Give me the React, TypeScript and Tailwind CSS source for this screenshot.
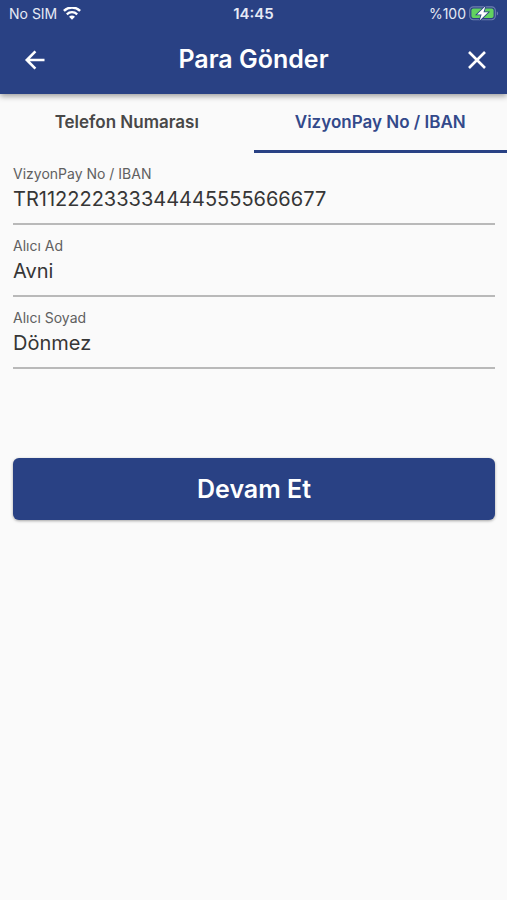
import { useState } from "react";

function WifiIcon() {
  return (
    <svg className="h-[14px] w-[18px]" viewBox="0 0 18 14" fill="none" aria-hidden="true">
      <path d="M0.9 3.9C5.4 -0.5 12.6 -0.5 17.1 3.9" stroke="white" strokeWidth="2.5" />
      <path d="M3.8 7.3C6.8 4.5 11.2 4.5 14.2 7.3" stroke="white" strokeWidth="2.3" />
      <path d="M9 12.8L6 9.8C7.7 8.2 10.3 8.2 12 9.8Z" fill="white" />
    </svg>
  );
}

function BatteryIcon() {
  return (
    <svg className="h-4 w-[30px]" viewBox="0 0 30 16" fill="none" aria-hidden="true">
      <rect x="0.7" y="0.9" width="25.6" height="12.8" rx="3.6" stroke="#7080b0" strokeWidth="1.1" />
      <path d="M27.8 5.2V9.6C29.6 8.8 29.6 6 27.8 5.2Z" fill="#7080b0" />
      <rect x="2.4" y="2.6" width="22.2" height="9.4" rx="2" fill="#62d35f" />
      <path
        d="M16.4 0.2L8 8.4H12.6L10.6 14.6L19.2 6.3H14.5Z"
        fill="white"
        stroke="#294184"
        strokeWidth="1.6"
        paintOrder="stroke"
      />
    </svg>
  );
}

function BackIcon() {
  return (
    <svg className="h-8 w-8" viewBox="0 0 32 32" fill="none" aria-hidden="true">
      <path d="M25.5 16H8M16.4 7.4L7.8 16L16.4 24.6" stroke="white" strokeWidth="2.6" />
    </svg>
  );
}

function CloseIcon() {
  return (
    <svg className="h-8 w-8" viewBox="0 0 32 32" fill="none" aria-hidden="true">
      <path d="M8 8L24 24M24 8L8 24" stroke="white" strokeWidth="2.6" />
    </svg>
  );
}

type FieldProps = { id: string; label: string; initial: string };

function Field({ id, label, initial }: FieldProps) {
  const [value, setValue] = useState(initial);
  return (
    <div className="flex h-[72px] flex-col border-b-2 border-[#b9b9b9] pt-[11px]">
      <label htmlFor={id} className="text-sm leading-5 text-[#606060]">
        {label}
      </label>
      <input
        id={id}
        value={value}
        onChange={(e) => setValue(e.target.value)}
        className="h-[30px] w-full bg-transparent text-xl text-[#363636] outline-none"
      />
    </div>
  );
}

const tabs = ["Telefon Numarası", "VizyonPay No / IBAN"];

export default function App() {
  const [active, setActive] = useState(1);
  return (
    <div className="min-h-screen bg-[#fafafa] font-['Inter','Liberation_Sans',sans-serif]">
      <header className="bg-[#294184] text-white shadow-[0_2px_6px_rgba(0,0,0,0.4)]">
        <div className="grid h-[27px] grid-cols-3 items-center px-2 text-sm text-[#e6eaf5]">
          <div className="flex items-center gap-[6px] pl-px">
            <span>No SIM</span>
            <WifiIcon />
          </div>
          <time className="text-center text-[15px] font-semibold">14:45</time>
          <div className="flex items-center justify-end gap-[3px]">
            <span>%100</span>
            <BatteryIcon />
          </div>
        </div>
        <div className="grid h-[67px] grid-cols-[1fr_auto_1fr] items-center pb-px">
          <button type="button" aria-label="Geri" className="ml-[19px] justify-self-start">
            <BackIcon />
          </button>
          <h1 className="text-[25px] font-semibold">Para Gönder</h1>
          <button type="button" aria-label="Kapat" className="mr-[14px] justify-self-end">
            <CloseIcon />
          </button>
        </div>
      </header>
      <main>
        <div role="tablist" className="grid grid-cols-2">
          {tabs.map((name, i) => (
            <button
              key={name}
              type="button"
              role="tab"
              aria-selected={active === i}
              onClick={() => setActive(i)}
              className={
                active === i
                  ? "h-[59px] border-b-[3px] border-[#294184] pt-[2px] text-[17px] font-semibold text-[#33498a]"
                  : "h-[59px] border-b-[3px] border-transparent pt-[2px] text-[17px] font-semibold text-[#484848]"
              }
            >
              {name}
            </button>
          ))}
        </div>
        <form className="pr-3 pl-[13px]" onSubmit={(e) => e.preventDefault()}>
          <Field id="iban" label="VizyonPay No / IBAN" initial="TR112222333344445555666677" />
          <Field id="first-name" label="Alıcı Ad" initial="Avni" />
          <Field id="last-name" label="Alıcı Soyad" initial="Dönmez" />
          <button
            type="submit"
            className="mt-[89px] h-[62px] w-full rounded-md bg-[#294184] pt-[2px] text-[25px] font-semibold text-white shadow-[0_1px_3px_rgba(0,0,0,0.35)]"
          >
            Devam Et
          </button>
        </form>
      </main>
    </div>
  );
}
